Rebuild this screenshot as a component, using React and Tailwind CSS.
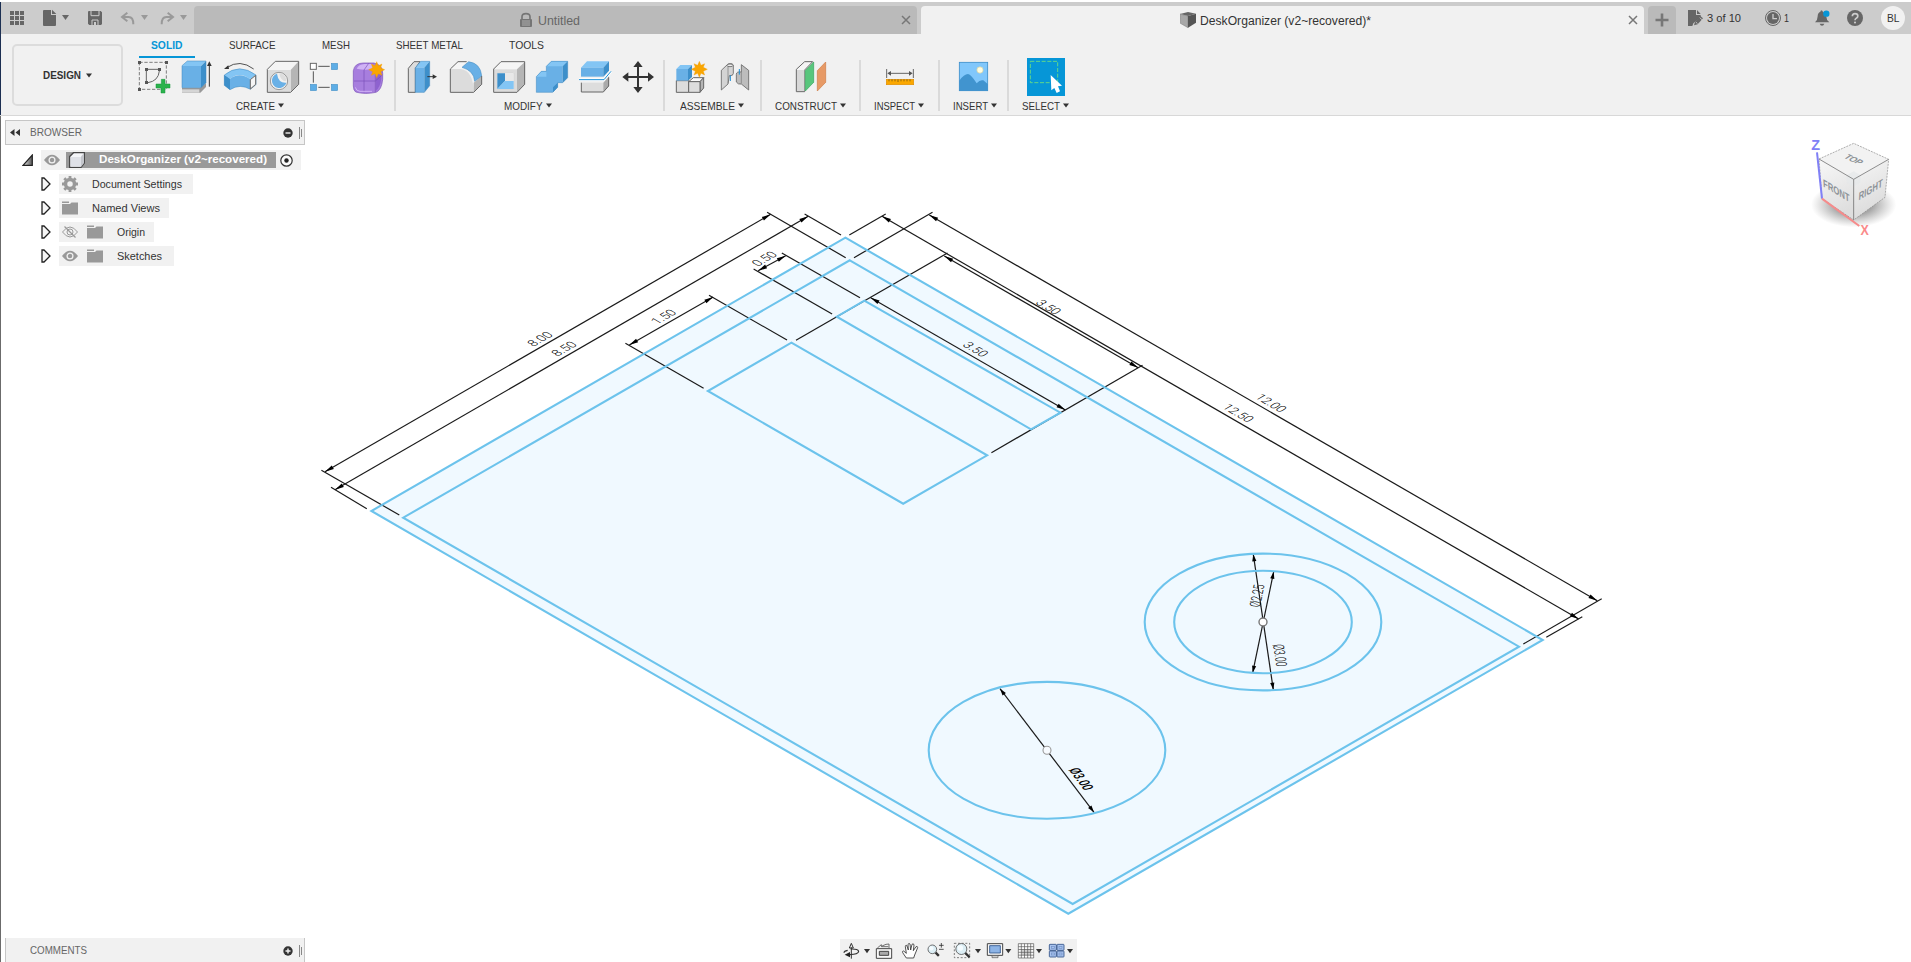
import React, { useLayoutEffect, useRef, useState } from "react";

/* One line of text, squeezed or stretched to an exact width in pixels. */
function Fit({ w, className = "", children }) {
  const ref = useRef(null);
  const [k, setK] = useState(1);
  useLayoutEffect(() => {
    const n = ref.current.getBoundingClientRect().width;
    if (n) setK(w / n);
  }, [w]);
  return (
    <span className="block shrink-0" style={{ width: w }}>
      <span
        ref={ref}
        className={"inline-block origin-left whitespace-nowrap align-top " + className}
        style={k === 1 ? undefined : { transform: `scaleX(${k})` }}
      >
        {children}
      </span>
    </span>
  );
}

/* Icon cell; drawing units are thirds of a pixel. */
function Ico({ x, y, w, h, children }) {
  return (
    <svg className="block shrink-0" width={w / 3} height={h / 3} viewBox={`${x} ${y} ${w} ${h}`}>
      {children}
    </svg>
  );
}

const Caret = () => (
  <svg className="mb-[2px] ml-[3px] block shrink-0" width="6" height="5" viewBox="0 0 6 5">
    <path d="M0 0.5H6L3 4.5Z" fill="#333" />
  </svg>
);

const STAR = "M0 -24L5 -12L16 -17L12 -6L24 0L12 6L16 17L5 12L0 24L-5 12L-16 17L-12 6L-24 0L-12 -6L-16 -17L-5 -12Z";

function Top(props) {
  return <Ico y={6} h={96} {...props} />;
}

function TitleBar() {
  return (
    <div className="flex h-[32px] w-full shrink-0 bg-[#ccc]">
      <div className="w-px shrink-0 bg-[#1c2f52]" />
      <Top x={3} w={96}>
        <g fill="#666">
          {[30, 45, 60].map((a) => [33, 48, 63].map((b) => <rect key={a + "-" + b} x={a} y={b} width="12" height="12" />))}
        </g>
      </Top>
      <Top x={99} w={132}>
        <path d="M132 30H153V45H168V75Q168 78 165 78H132Q129 78 129 75V33Q129 30 132 30Z" fill="#666" />
        <path d="M156 29L169 42H156Z" fill="#666" />
        <path d="M186 45H207L196.500 60Z" fill="#666" />
      </Top>
      <Top x={231} w={102}>
        <path d="M266 33H302L306 37V72L303 75H268L264 71V35Z" fill="#666" />
        <path d="M273 33V47H297V33" fill="none" stroke="#ccc" strokeWidth="3" />
        <path d="M276 75V60H294V75" fill="none" stroke="#ccc" strokeWidth="3" />
        <rect x="282" y="66" width="6" height="9" fill="#ccc" />
      </Top>
      <Top x={333} w={126}>
        <path d="M382 38L366 51L382 64M367 51H386Q400 51 400 73" fill="none" stroke="#999" strokeWidth="6" />
        <path d="M423 45H444L433.500 60Z" fill="#999" />
      </Top>
      <Top x={459} w={123}>
        <path d="M503 38L519 51L503 64M518 51H499Q485 51 485 73" fill="none" stroke="#999" strokeWidth="6" />
        <path d="M540 45H561L550.500 60Z" fill="#999" />
      </Top>
      <div className="mt-1 flex h-7 w-[723px] shrink-0 items-center rounded-t-[4px] bg-[#bababa] text-[12.5px] text-[#666]">
        <svg className="ml-[325px] block" width="14" height="16" viewBox="357 36 42 48">
          <path d="M366 57V50Q366 41 378 41Q390 41 390 50V57" fill="none" stroke="#757575" strokeWidth="5" />
          <rect x="360" y="57" width="36" height="24" rx="3" fill="#757575" />
          <path d="M366 63H390M366 69H390M366 75H390" stroke="#bababa" strokeWidth="2.500" />
        </svg>
        <div className="ml-[5px] flex-1 pt-[2px]">
          <Fit w={42}>Untitled</Fit>
        </div>
        <svg className="mr-[6px] block" width="10" height="10" viewBox="0 0 10 10">
          <path d="M1 1L9 9M9 1L1 9" stroke="#777" strokeWidth="1.500" />
        </svg>
      </div>
      <div className="mt-1 ml-1 flex h-7 w-[723px] shrink-0 items-center rounded-t-[4px] bg-[#f1f1f1] text-[12.5px] text-[#333]">
        <svg className="ml-[259px] block" width="16" height="16" viewBox="1140 36 48 48">
          <path d="M1140 42L1164 36L1188 41L1164 48Z" fill="#666" />
          <path d="M1140 42L1164 48V83L1141 70Z" fill="#a8a8a8" stroke="#777" strokeWidth="1.500" />
          <path d="M1164 48L1188 41V68L1164 83Z" fill="#555" />
        </svg>
        <div className="ml-[4px] flex-1 pt-[2px]">
          <Fit w={171}>DeskOrganizer (v2~recovered)*</Fit>
        </div>
        <svg className="mr-[6px] block" width="10" height="10" viewBox="0 0 10 10">
          <path d="M1 1L9 9M9 1L1 9" stroke="#777" strokeWidth="1.500" />
        </svg>
      </div>
      <div className="mt-1 ml-1 flex h-7 w-7 shrink-0 items-center justify-center rounded-t-[4px] bg-[#bababa]">
        <svg className="block" width="14" height="14" viewBox="0 0 14 14">
          <path d="M7 0.500V13.500M0.500 7H13.500" stroke="#777" strokeWidth="2.600" />
        </svg>
      </div>
      <div className="flex flex-1 items-center text-[11px] text-[#333]">
        <Top x={528} w={93}>
          <path d="M564 30H588V45H602V52L580 70L577 78H564Z" fill="#666" />
          <path d="M591 30L602 42H591Z" fill="#666" />
          <path d="M582 76L585 66L601 48L609 55L593 73Z" fill="#666" />
          <path d="M588 66L592 71M599 53L606 59" stroke="#ccc" strokeWidth="2.500" />
        </Top>
        <Fit w={34}>3 of 10</Fit>
        <Top x={723} w={129}>
          <circle cx="819" cy="54" r="22.500" fill="#ccc" stroke="#666" strokeWidth="3" />
          <circle cx="819" cy="54" r="18" fill="#666" />
          <path d="M819 42V56H831" fill="none" stroke="#ccc" strokeWidth="4" />
        </Top>
        <Fit w={5}>1</Fit>
        <Top x={867} w={147}>
          <path d="M963 31Q968 31 969 36Q979 39 979 50Q979 60 988 67H945Q953 60 953 49Q953 38 961 35Z" fill="#666" />
          <path d="M959 71H973Q971 77 966 77Q961 77 959 71Z" fill="#666" />
          <circle cx="979" cy="41" r="9.500" fill="#0696d7" />
        </Top>
        <Top x={1014} w={99}>
          <circle cx="1065" cy="54" r="24" fill="#666" />
          <path d="M1057 49Q1057 41 1065 41Q1073.500 41 1073.500 48Q1073.500 52 1069 54.500Q1065 57 1065 61" fill="none" stroke="#ccc" strokeWidth="5" />
          <circle cx="1065" cy="67.500" r="3.200" fill="#ccc" />
        </Top>
        <div className="ml-[10px] flex h-6 w-6 items-center justify-center rounded-full bg-[#f1f1f1]">
          <Fit w={12.5}>BL</Fit>
        </div>
      </div>
    </div>
  );
}

function Cell({ x, children }) {
  return (
    <Ico x={x} y={174} w={129} h={117}>
      {children}
    </Ico>
  );
}

function Group({ className, iconsClass, labelClass, label, w, last, children }) {
  return (
    <div className={"flex shrink-0 " + className}>
      <div className="flex flex-1 flex-col overflow-visible">
        <div className={"flex h-[39px] " + iconsClass}>{children}</div>
        <div className={"flex h-[18px] items-center pt-px text-[11px] text-[#333] " + labelClass}>
          <Fit w={w}>{label}</Fit>
          <Caret />
        </div>
      </div>
      {!last && <div className="mt-[2px] h-[51px] w-[2px] shrink-0 bg-[#dadada]" />}
    </div>
  );
}

const ST = { stroke: "#666", strokeWidth: 3, strokeLinejoin: "miter" };

function Toolbar() {
  return (
    <div className="flex h-[82px] w-full shrink-0 border-b border-[#d8d8d8] bg-[#f1f1f1]">
      <div className="w-px shrink-0 bg-[#1c2f52]" />
      <div className="mt-[10px] ml-[11px] flex h-[62px] w-[111px] shrink-0 items-center rounded-[5px] border-2 border-[#dcdcdc] pl-[29px] text-[11px] font-bold text-[#333]">
        <Fit w={38}>DESIGN</Fit>
        <svg className="ml-[5px] block" width="6" height="5" viewBox="0 0 6 5">
          <path d="M0 0.500H6L3 4.500Z" fill="#333" />
        </svg>
      </div>
      <div className="flex flex-1 flex-col">
        <div className="flex h-6 text-[11px] leading-[22px] text-[#333]">
          <div className="ml-4 flex w-[56px] justify-center border-b-2 border-[#0696d7] font-bold text-[#0696d7]">
            <Fit w={31.5}>SOLID</Fit>
          </div>
          <div className="ml-[34px] flex gap-[46px]">
            <Fit w={46.5}>SURFACE</Fit>
            <Fit w={28}>MESH</Fit>
            <Fit w={67}>SHEET METAL</Fit>
            <Fit w={35}>TOOLS</Fit>
          </div>
        </div>
        <div className="flex">
          <Group className="w-[273px]" iconsClass="pl-[12px]" labelClass="pl-[113px]" label="CREATE" w={39}>
            <Cell x={405}>
              <path d="M418 187H499V268H418Z" fill="none" stroke="#666" strokeWidth="2.500" strokeDasharray="10 5" />
              <g fill="#555">
                <rect x="414" y="183" width="9" height="9" /><rect x="495" y="183" width="9" height="9" />
                <rect x="414" y="264" width="9" height="9" /><rect x="435" y="204" width="9" height="9" />
                <rect x="474" y="204" width="9" height="9" /><rect x="435" y="243" width="9" height="9" />
              </g>
              <path d="M444 208H474M439 213V243M478 213Q475 243 444 248" fill="none" stroke="#666" strokeWidth="3" />
              <path d="M484 238H495V252H510V264H495V279H483V264H468V252H484Z" fill="#2bb24c" stroke="#15953a" strokeWidth="1.500" />
            </Cell>
            <Cell x={534}>
              <path d="M546 264H600L618 249V261L601 278H546Z" fill="#999" /><path d="M546 268H598V278H546Z" fill="#d5d5d5" />
              <path d="M546 197L562 183H618L602 198H546Z" fill="#83c5f4" />
              <path d="M546 198H603V263H546Z" fill="#69b0e6" /><path d="M603 198L618 183V248L603 263Z" fill="#3d8fca" />
              <path d="M546 197L562 183H618V248L603 263H546Z" fill="none" stroke="#3d87bd" strokeWidth="1.500" />
              <path d="M628 260V196" stroke="#333" strokeWidth="3" /><path d="M628 184L635 198H621Z" fill="#333" />
            </Cell>
            <Cell x={663}>
              <path d="M680 203Q720 176 761 207" fill="none" stroke="#333" strokeWidth="2.500" />
              <path d="M672 207L685 196L687 207Z" fill="#333" />
              <path d="M673 225Q718 188 768 225L751 238Q718 212 690 237Z" fill="#83c5f4" />
              <path d="M690 237Q718 214 751 238V268Q720 250 690 269L673 256V225Z" fill="#69b0e6" />
              <path d="M673 225L690 237V269L673 256Z" fill="#3d8fca" />
              <path d="M673 225Q718 188 768 225V254L751 268Q720 250 690 269L673 256Z" fill="none" stroke="#3d87bd" strokeWidth="1.500" />
              <path d="M751 239L767 226V253L751 267Z" fill="#f5f5f5" stroke="#666" strokeWidth="3" />
            </Cell>
            <Cell x={792}>
              <path d="M802 207L826 184H896L872 212H802Z" fill="#f4f4f4" /><path d="M872 210L896 184V253L872 277Z" fill="#b5b5b5" />
              <path d="M802 210H872V277H802Z" fill="#dcdcdc" />
              <path d="M802 208L826 184H896V253L872 277H802Z" fill="none" {...ST} />
              <circle cx="837" cy="243" r="26" fill="#f1f1f1" stroke="#888" strokeWidth="2.500" />
              <path d="M831 221A22 22 0 1 0 859 248Q835 250 831 221Z" fill="#69b0e6" /><path d="M838 220Q841 243 859 244A22 22 0 0 0 838 220Z" fill="#ddd" />
            </Cell>
            <Cell x={921}>
              <path d="M955 199H989M940 214V248M955 262H989" stroke="#555" strokeWidth="3" />
              <rect x="931" y="190" width="18" height="18" fill="#fff" stroke="#666" strokeWidth="3" />
              <g fill="#5dade6" stroke="#3d87bd" strokeWidth="1.500">
                <rect x="994" y="190" width="19" height="19" /><rect x="931" y="253" width="19" height="19" /><rect x="994" y="253" width="19" height="19" />
              </g>
            </Cell>
            <Cell x={1050}>
              <path d="M1060 212Q1064 189 1090 189H1122Q1148 195 1148 220V238Q1145 270 1128 277Q1094 284 1067 276Q1060 270 1060 258Z" fill="#a77ede" stroke="#7a50b8" strokeWidth="2" />
              <path d="M1070 206Q1076 193 1094 192H1116Q1122 202 1116 207Q1094 212 1070 206Z" fill="#d0b3f5" />
              <path d="M1128 214L1144 208V236Q1141 260 1128 272Z" fill="#8e62cf" />
              <path d="M1062 243H1126L1147 225M1092 277V210L1106 190M1126 276V212" fill="none" stroke="#7a50b8" strokeWidth="2" />
              <path d="M1066 262Q1068 273 1080 274H1116" fill="none" stroke="#d0b3f5" strokeWidth="3" />
              <path transform="translate(1130 209)" d={STAR} fill="#f9a602" stroke="#f39a00" strokeWidth="1" />
            </Cell>
          </Group>
          <Group className="w-[269px]" iconsClass="pl-[9px]" labelClass="pl-[108px]" label="MODIFY" w={38.5}>
            <Cell x={15}>
              <path d="M25 205L42 185H60L46 205V277H25Z" fill="#ddd" {...ST} />
              <path d="M46 203L62 184H89L73 203Z" fill="#83c5f4" /><path d="M46 203H73V277H46Z" fill="#69b0e6" />
              <path d="M73 203L89 184V257L73 277Z" fill="#3d8fca" />
              <path d="M46 203L62 184H89V257L73 277H46Z" fill="none" stroke="#3d87bd" strokeWidth="1.500" />
              <path d="M82 230H100" stroke="#333" strokeWidth="3" /><path d="M111 230L98 223V237Z" fill="#333" />
            </Cell>
            <Cell x={144}>
              <path d="M151 207L174 185H196L184 207Z" fill="#f5f5f5" />
              <path d="M151 207H182Q220 212 221 277H151Z" fill="#dcdcdc" />
              <path d="M221 248L245 228V253L221 277Z" fill="#b5b5b5" />
              <path d="M186 202L206 185Q242 190 245 228L224 244Q222 212 186 202Z" fill="#69b0e6" stroke="#3d87bd" strokeWidth="1.500" />
              <path d="M200 185H174L151 207V277H221L245 253V228" fill="none" {...ST} />
            </Cell>
            <Cell x={273}>
              <path d="M281 207L303 185H375L351 208Z" fill="#f5f5f5" /><path d="M351 208L375 185V253L351 277Z" fill="#b5b5b5" />
              <path d="M281 208H351V277H281Z" fill="#dcdcdc" /><path d="M281 207L303 185H374V253L351 277H281Z" fill="none" {...ST} />
              <path d="M290 218H342V268H290Z" fill="#f1f1f1" /><path d="M291 219H341V267H291Z" fill="#f8f8f8" stroke="#aaa" strokeWidth="1" />
              <path d="M292 220H315V243L292 267Z" fill="#3d8fca" /><path d="M315 243H341V267H292Z" fill="#83c5f4" /><path d="M315 220H341V243H315Z" fill="#e8e8e8" />
            </Cell>
            <Cell x={402}>
              <path d="M409 230L424 214H439V199L454 184H503L488 199V248H473V262L458 277H409Z" fill="#69b0e6" />
              <path d="M439 199L454 184H503L488 199ZM409 230L424 214H439V230Z" fill="#83c5f4" />
              <path d="M488 199L503 184V233L488 248ZM459 262L473 248V262L459 277Z" fill="#3d8fca" />
              <path d="M409 230L424 214H439V199L454 184H503V233L488 248H473V262L458 277H409Z" fill="none" stroke="#3d87bd" strokeWidth="1.500" />
            </Cell>
            <Cell x={531}>
              <path d="M543 203L561 184H627L610 203Z" fill="#83c5f4" /><path d="M543 203H610V230H543Z" fill="#69b0e6" /><path d="M610 203L627 184V212L610 230Z" fill="#3d8fca" />
              <path d="M537 239H612L633 214" fill="none" stroke="#fff" strokeWidth="8" /><path d="M537 239H612L633 214" fill="none" stroke="#1b8fd6" strokeWidth="3" />
              <path d="M544 248H610V276H544Z" fill="#ddd" /><path d="M610 248L627 229V258L610 276Z" fill="#aaa" />
              <path d="M544 248V276H610L626 258V232" fill="none" {...ST} />
            </Cell>
            <Cell x={660}>
              <path d="M714 195V266M680 231H750" stroke="#333" strokeWidth="6" />
              <path d="M714 183L728 201H700ZM714 279L728 261H700ZM667 231L685 217V245ZM762 231L744 217V245Z" fill="#333" />
            </Cell>
          </Group>
          <Group className="w-[97px]" iconsClass="pl-[8px]" labelClass="pl-[15px]" label="ASSEMBLE" w={55}>
            <Cell x={819}>
              <path d="M829 242H866V277H829Z" fill="#ddd" {...ST} /><path d="M866 245L880 233H911L900 245Z" fill="#fafafa" {...ST} />
              <path d="M900 245L911 233V264L900 277Z" fill="#b5b5b5" {...ST} /><path d="M866 245H900V277H866Z" fill="#ddd" {...ST} />
              <path d="M829 207L841 195H876L864 207Z" fill="#83c5f4" /><path d="M829 207H864V242H829Z" fill="#69b0e6" /><path d="M864 207L876 195V231L864 242Z" fill="#3d8fca" />
              <path transform="translate(898 208)" d={STAR} fill="#f9a602" stroke="#f39a00" strokeWidth="1" />
            </Cell>
            <Cell x={948}>
              <path d="M964 211L984 192Q1000 188 1000 198V220Q1000 228 988 227L984 252L964 270Z" fill="#d4d4d4" {...ST} strokeWidth="2.500" />
              <ellipse cx="990" cy="196" rx="9" ry="4" fill="#eee" stroke="#666" strokeWidth="2.500" /><path d="M984 199V250" stroke="#777" strokeWidth="2" />
              <path d="M1046 211L1024 194V216Q1009 214 1009 223V246Q1014 254 1024 252L1046 270Z" fill="#bdbdbd" {...ST} strokeWidth="2.500" />
              <path d="M1024 216V250" stroke="#777" strokeWidth="2" />
              <path d="M991 226V243M1018 207V224" stroke="#1b8fd6" strokeWidth="3" />
            </Cell>
          </Group>
          <Group className="w-[99px]" iconsClass="pl-[31px]" labelClass="pl-[13px]" label="CONSTRUCT" w={62}>
            <Cell x={-21}>
              <path d="M-11 208L14 185H38L14 210V275H-11Z" fill="#f5f5f5" {...ST} /><path d="M-9 210H13V273H-9Z" fill="#d8d8d8" />
              <path d="M16 212L41 186V247L16 273Z" fill="#58c67c" stroke="#35a45b" strokeWidth="2" />
              <path d="M52 212L77 186V247L52 273Z" fill="#e79a66" stroke="#cf7a43" strokeWidth="2" />
            </Cell>
          </Group>
          <Group className="w-[79px]" iconsClass="pl-[23px]" labelClass="pl-[13px]" label="INSPECT" w={41}>
            <Cell x={252}>
              <path d="M260 207V234M340 207V234M268 220H332" stroke="#666" strokeWidth="3" />
              <path d="M262 220L273 213V227ZM338 220L327 213V227Z" fill="#555" />
              <rect x="259" y="238" width="82" height="16" fill="#fba800" stroke="#e08e00" strokeWidth="2" />
              <path d="M267 238V244M276 238V244M285 238V244M294 238V246M303 238V244M312 238V244M321 238V244M330 238V244" stroke="#7a5a10" strokeWidth="2.500" />
            </Cell>
          </Group>
          <Group className="w-[69px]" iconsClass="pl-[17px]" labelClass="pl-[13px]" label="INSERT" w={35}>
            <Cell x={471}>
              <rect x="478" y="187" width="85" height="85" fill="#81c7fb" />
              <path d="M478 242Q492 222 504 222Q514 224 530 250Q540 238 550 241L563 252V272H478Z" fill="#4194cf" />
              <rect x="478" y="187" width="85" height="85" fill="none" stroke="#3d8fca" strokeWidth="2.500" />
              <circle cx="540" cy="210" r="9.500" fill="#fffde0" stroke="#d3cfa0" strokeWidth="2" />
            </Cell>
          </Group>
          <Group className="w-[200px]" iconsClass="pl-[16px]" labelClass="pl-[13px]" label="SELECT" w={38} last>
            <Cell x={675}>
              <rect x="681" y="174" width="114" height="114" fill="#0696d7" />
              <path d="M691 184H773V248H691Z" fill="none" stroke="#62d68a" strokeWidth="3" strokeDasharray="12 5" />
              <path d="M752 225L786 257L774 259L780 274L770 279L763 264L754 271Z" fill="#fff" />
            </Cell>
          </Group>
        </div>
      </div>
    </div>
  );
}

const Grip = () => (
  <svg className="block shrink-0" width="4" height="12" viewBox="0 0 4 12">
    <path d="M0.500 0V12" stroke="#888" /><path d="M2.500 2V10" stroke="#888" />
  </svg>
);

function Eye({ off }) {
  return (
    <svg className="block shrink-0" width="16" height="12" viewBox="0 0 16 12">
      {off ? (
        <g fill="none" stroke="#999" strokeWidth="1">
          <path d="M0.500 6Q8 -4 15.500 6Q8 16 0.500 6Z" /><circle cx="8" cy="6" r="3" /><path d="M2.500 0.500L13.500 11.500" strokeWidth="1.300" />
        </g>
      ) : (
        <g>
          <path d="M0 6Q8 -4.500 16 6Q8 16.500 0 6Z" fill="#999" />
          <circle cx="8" cy="6" r="2.900" fill="none" stroke="#f1f1f1" strokeWidth="1.300" />
        </g>
      )}
    </svg>
  );
}

const Folder = () => (
  <svg className="block shrink-0" width="16" height="14" viewBox="0 0 16 14">
    <path d="M0 0.500H7V2H0ZM0 3H8L9.500 1.500H16V13.500H0Z" fill="#999" />
  </svg>
);

const Gear = () => (
  <svg className="block shrink-0" width="16" height="16" viewBox="0 0 16 16">
    <circle cx="8" cy="8" r="4.500" fill="none" stroke="#999" strokeWidth="3.500" />
    <path d="M8 0V3M8 13V16M0 8H3M13 8H16M2.300 2.300L4.500 4.500M11.500 11.500L13.700 13.700M13.700 2.300L11.500 4.500M4.500 11.500L2.300 13.700" stroke="#999" strokeWidth="2.800" />
  </svg>
);

function Node({ width, eye, icon, label, w }) {
  return (
    <div className="flex h-5 items-center">
      <svg className="mr-[8px] ml-[36px] block shrink-0" width="10" height="14" viewBox="0 0 10 14">
        <path d="M1 1H3L9 7L3 13H1Z" fill="#f6f6f6" stroke="#222" strokeWidth="1.300" />
      </svg>
      <div className={"flex h-5 items-center bg-[#f1f1f1] pl-[3px] text-[11px] text-[#333] " + width}>
        {eye && <span className="mr-[9px]"><Eye off={eye === "off"} /></span>}
        {icon === "gear" ? <Gear /> : <Folder />}
        <span className="ml-[14px]"><Fit w={w}>{label}</Fit></span>
      </div>
    </div>
  );
}

function Browser() {
  return (
    <div className="flex w-[300px] flex-col">
      <div className="flex h-[25px] items-center border border-[#c6c6c6] bg-[#f1f1f1] pr-[1px] pl-[4px] text-[11px] text-[#666]">
        <svg className="mr-[10px] block" width="10" height="7" viewBox="0 0 10 7">
          <path d="M0 3.500L4.500 0V7ZM5.500 3.500L10 0V7Z" fill="#333" />
        </svg>
        <div className="flex-1"><Fit w={52}>BROWSER</Fit></div>
        <svg className="mr-[6px] block" width="10" height="10" viewBox="0 0 10 10">
          <circle cx="5" cy="5" r="4.700" fill="#333" /><path d="M2.500 5H7.500" stroke="#f1f1f1" strokeWidth="1.400" />
        </svg>
        <Grip />
      </div>
      <div className="mt-[5px] flex flex-col gap-1">
        <div className="flex h-5 items-center">
          <svg className="mr-[8px] ml-[17px] block shrink-0" width="11" height="12" viewBox="0 0 11 12">
            <defs><linearGradient id="tw"><stop offset="0" stopColor="#eee" /><stop offset="1" stopColor="#555" /></linearGradient></defs>
            <path d="M1 11.300L10.300 1V11.300Z" fill="url(#tw)" stroke="#222" strokeWidth="1.200" />
          </svg>
          <div className="flex h-5 w-[260px] items-center bg-[#f1f1f1] pl-[3px]">
            <Eye />
            <div className="ml-[6px] flex h-4 w-[210px] items-center bg-[#999] pl-[3px] text-[11.5px] font-bold text-white">
              <svg className="mr-[14px] block shrink-0" width="16" height="16" viewBox="0 0 16 16">
                <path d="M0.700 4.500L4.500 0.700H15.300V11L12 15.300H0.700Z" fill="#f4f5f8" stroke="#444" strokeWidth="1.300" />
                <path d="M12 4.500L15 1V11L12 15Z" fill="#c4c6cc" /><path d="M1.500 5H12V14.600H1.500Z" fill="#dfe1e7" />
              </svg>
              <Fit w={168}>DeskOrganizer (v2~recovered)</Fit>
            </div>
            <svg className="ml-[4px] block shrink-0" width="13" height="13" viewBox="0 0 13 13">
              <circle cx="6.500" cy="6.500" r="5.700" fill="#fafafa" stroke="#333" strokeWidth="1.200" /><circle cx="6.500" cy="6.500" r="2.200" fill="#222" />
            </svg>
          </div>
        </div>
        <Node width="w-[134px]" icon="gear" label="Document Settings" w={90} />
        <Node width="w-[110px]" icon="folder" label="Named Views" w={68} />
        <Node width="w-[95px]" eye="off" icon="folder" label="Origin" w={28} />
        <Node width="w-[115px]" eye="on" icon="folder" label="Sketches" w={45} />
      </div>
    </div>
  );
}

/* Extension lines of the linear dimensions: x1 y1 x2 y2 */
const EXT = [
  [321.4, 470.3, 399.3, 515], [767.1, 212.3, 845.7, 257.7],
  [331, 487.3, 366.8, 508.7], [804.6, 214, 841, 235],
  [753.6, 269, 832.1, 314], [781.8, 253, 860, 297.7],
  [625.4, 343.3, 703.6, 388.3], [709, 295.3, 787, 340],
  [932.5, 212.3, 854, 257.7], [1601.7, 598.7, 1523.3, 644],
  [885.7, 214, 849.3, 235], [1582.3, 616.7, 1546.3, 637.3],
  [947.5, 253, 796, 340.3], [1142.5, 365.3, 991.4, 452.7],
];
const DIMS = [
  [325, 471.7, 770.7, 214.3], [335, 489.7, 808.2, 216.3], [758.2, 270.7, 785.7, 255.7],
  [629.3, 345, 713.2, 297], [929.3, 215, 1597.3, 600.7], [882.1, 216.3, 1578.7, 619],
  [944.3, 256, 1138.2, 367.7], [870.7, 297.7, 1065.4, 410],
  [1253.3, 554.3, 1273.3, 689.7], [1273.7, 571.7, 1252.7, 672.7], [1000, 688.7, 1094, 812.3],
];
const L = "0.866 -0.5 0.866 0.5";
const R = "0.866 0.5 -0.866 0.5";
const VALUES = [
  ["8.00", L, 540, 339], ["8.50", L, 564, 348.7], ["1.50", L, 663.6, 316.7], ["0.50", L, 764.3, 258.7],
  ["3.50", R, 1048.6, 307], ["3.50", R, 975.7, 349.3], ["12.00", R, 1271, 403], ["12.50", R, 1238.2, 413],
  ["Ø2.25", "0.146 -0.702 1.216 0.084", 1257, 595.7],
  ["Ø3.00", "0.104 0.704 -1.22 0.06", 1280, 655.3],
  ["Ø3.00", "0.492 0.648 -1.122 0.284", 1081.3, 779],
];

function head(tx, ty, fx, fy) {
  const d = Math.hypot(tx - fx, ty - fy);
  const ux = (tx - fx) / d, uy = (ty - fy) / d;
  const n = Math.abs(uy) > 0.7 ? 7 : 9, s = 2.1;
  const bx = tx - ux * n, by = ty - uy * n;
  return `${tx},${ty} ${bx - uy * s},${by + ux * s} ${bx + uy * s},${by - ux * s}`;
}

function Sketch() {
  return (
    <svg className="block" width="1910" height="846" viewBox="1 116 1910 846">
      <path d="M845.400 237.700L1542.700 640L1068.300 913.700L371.400 511Z" fill="#f0f9ff" />
      <g stroke="#1a1a1a" strokeWidth="1.200">
        {[...EXT, ...DIMS].map((d, i) => <line key={i} x1={d[0]} y1={d[1]} x2={d[2]} y2={d[3]} />)}
      </g>
      <g fill="#000">
        {DIMS.map((d, i) => (
          <g key={i}>
            <polygon points={head(d[0], d[1], d[2], d[3])} /><polygon points={head(d[2], d[3], d[0], d[1])} />
          </g>
        ))}
      </g>
      <g fill="none" stroke="#6cc3ec" strokeWidth="2.100">
        <path d="M845.400 237.700L1542.700 640L1068.300 913.700L371.400 511Z" />
        <path d="M849.800 260.300L1519 646.700L1072.700 904L403.200 517.700Z" />
        <path d="M791.400 342.700L987.100 455.300L903.200 503.700L707.900 391Z" />
        <path d="M864.300 300.700L1060.400 412.700L1031 429.300L836.800 316.700Z" />
        <ellipse cx="1263" cy="622" rx="118.300" ry="68.400" /><ellipse cx="1263" cy="622" rx="88.800" ry="51.200" />
        <ellipse cx="1047" cy="750.300" rx="118.300" ry="68.400" />
      </g>
      <circle cx="1263" cy="622" r="4" fill="#fff" stroke="#777" strokeWidth="1.400" />
      <circle cx="1047" cy="750.300" r="4" fill="#f7fbff" stroke="#999" strokeWidth="1.100" />
      <g fill="#000" className="font-['Roboto','Liberation_Sans',sans-serif] text-[12.300px]" textAnchor="middle">
        {VALUES.map(([t, m, x, y], i) => (
          <text key={i} transform={`matrix(${m} ${x} ${y})`} y="4.300" fontWeight={i === 10 ? 500 : 300}>{t}</text>
        ))}
      </g>
    </svg>
  );
}

function ViewCube() {
  return (
    <svg className="block" width="116" height="120" viewBox="885 390 348 360">
      <defs>
        <linearGradient id="cf" x1="0" y1="0" x2="0.300" y2="1"><stop offset="0" stopColor="#f8f8f8" /><stop offset="1" stopColor="#dedede" /></linearGradient>
        <linearGradient id="cr" x1="0.300" y1="0" x2="0.600" y2="1"><stop offset="0" stopColor="#f4f4f4" /><stop offset="1" stopColor="#d8d8d8" /></linearGradient>
        <radialGradient id="cs"><stop offset="0.450" stopColor="#777" stopOpacity="0.650" /><stop offset="1" stopColor="#999" stopOpacity="0" /></radialGradient>
      </defs>
      <ellipse cx="1061" cy="614" rx="128" ry="68" fill="url(#cs)" />
      <path d="M957 477L1061 538V660L966 596Z" fill="url(#cf)" /><path d="M1061 538L1166 478L1155 592L1061 660Z" fill="url(#cr)" />
      <path d="M1061 430L1166 478L1061 538L957 477Z" fill="#f2f2f2" />
      <path d="M1040 526L1061 514L1082 526V548L1061 560L1040 548Z" fill="#e5e8ea" fillOpacity="0.700" />
      <path d="M957 477L1061 430L1166 478L1155 592L1061 660L966 596Z" fill="none" stroke="#888" strokeWidth="2" strokeDasharray="6 3" />
      <path d="M957 477L1061 538L1166 478M1061 538V660" fill="none" stroke="#777" strokeWidth="2.500" />
      <path d="M951 457L966 596" stroke="#8080f6" strokeWidth="6" /><path d="M966 596L1078 678" stroke="#f68b8b" strokeWidth="6" />
      <g className="font-['Liberation_Sans',sans-serif]" textAnchor="middle" fill="#8d9297" fontWeight="bold">
        <text transform="matrix(0.76 0.38 -0.8 0.53 1062 478)" y="11" fontSize="30">TOP</text>
        <text transform="matrix(0.7 0.42 0.05 1 1009 571)" y="12" fontSize="33">FRONT</text>
        <text transform="matrix(0.7 -0.42 -0.05 1 1112 568)" y="12" fontSize="33">RIGHT</text>
        <text x="947" y="451" fontSize="43" fill="#8080f6">Z</text>
        <text x="1094" y="704" fontSize="43" fill="#fa8a8a" textLength="25" lengthAdjust="spacingAndGlyphs">X</text>
      </g>
    </svg>
  );
}

function NavBar() {
  const C = (p) => <Ico y={837} h={69} {...p} />;
  const tri = (x) => <path d={`M${x - 9} 867H${x + 9}L${x} 880Z`} fill="#333" />;
  const glass = (cx, cy, r) => (
    <g>
      <path d={`M${cx + r * 0.7} ${cy + r * 0.7}L${cx + r * 1.5} ${cy + r * 1.5}`} stroke="#333" strokeWidth="7" />
      <circle cx={cx} cy={cy} r={r} fill="#dceef5" stroke="#555" strokeWidth="2.500" />
      <circle cx={cx - 3} cy={cy - 3} r={r * 0.5} fill="#f5fcff" />
    </g>
  );
  return (
    <div className="flex h-[23px] w-[237px] bg-[#f1f1f1]">
      <C x={60} w={96}>
        <path d="M94 896V862M88 864L94 850L100 864Z" fill="#f1f1f1" stroke="#333" strokeWidth="3" />
        <path d="M92 867Q116 866 116 875Q114 883 90 884M83 871Q72 873 72 878" fill="none" stroke="#333" strokeWidth="3.500" />
        <path d="M74 884L90 876V892Z" fill="#222" />
        {tri(141)}
      </C>
      <C x={156} w={75}>
        <path d="M169 866H215V895H169Z" fill="#f8f8f8" stroke="#444" strokeWidth="3" /><path d="M178 874H206V886H178Z" fill="#aaa" stroke="#444" strokeWidth="3" />
        <path d="M172 864L184 854V859L198 853L207 852V864M184 860H205" fill="none" stroke="#555" strokeWidth="2.500" />
      </C>
      <C x={231} w={78}>
        <path d="M259 894L248 878Q246 873 251 873L259 880L256 860Q256 855 260 856L265 870L264 853Q267 848 270 852L272 870L276 853Q281 849 282 855L280 872L288 860Q293 858 293 863L284 885L281 894Z" fill="#fff" stroke="#333" strokeWidth="2.500" strokeLinejoin="round" />
      </C>
      <C x={309} w={81}>
        {glass(337, 868, 13)}
        <path d="M364 849V863M357 856H371M357 868H371" stroke="#333" strokeWidth="2.500" />
      </C>
      <C x={390} w={99}>
        <path d="M403 850H449V893H403Z" fill="none" stroke="#444" strokeWidth="2" strokeDasharray="6 5" />
        {glass(424, 867, 16.5)}
        {tri(474)}
      </C>
      <C x={489} w={93}>
        <path d="M502 851H548V886H502Z" fill="#f8f8f8" stroke="#444" strokeWidth="3" /><path d="M509 857H541V879H509Z" fill="#8db4e6" stroke="#2d5288" strokeWidth="2.500" />
        <path d="M516 887H534V893H516Z" fill="#ddd" stroke="#555" strokeWidth="2" />
        {tri(565)}
      </C>
      <C x={582} w={93}>
        <rect x="595" y="851" width="46" height="43" fill="#fafafa" /><rect x="604" y="868" width="28" height="18" fill="#cfcfcf" />
        <path d="M595 851H641V894H595ZM595 860H641M595 868.500H641M595 877H641M595 885.500H641M604 851V894M613.500 851V894M623 851V894M632 851V894" fill="none" stroke="#555" strokeWidth="2" />
        {tri(657)}
      </C>
      <C x={675} w={96}>
        <g fill="#a9c3ee" stroke="#2f4f86" strokeWidth="2.500">
          <rect x="688" y="853" width="21" height="18" rx="2" /><rect x="711" y="853" width="21" height="18" rx="2" />
          <rect x="688" y="873" width="21" height="18" rx="2" /><rect x="711" y="873" width="21" height="18" rx="2" />
        </g>
        <g fill="none" stroke="#6f8fc6" strokeWidth="2">
          <rect x="694" y="859" width="9" height="6" /><rect x="717" y="859" width="9" height="6" /><rect x="694" y="879" width="9" height="6" /><rect x="717" y="879" width="9" height="6" />
        </g>
        {tri(750)}
      </C>
    </div>
  );
}

export default function App() {
  return (
    <div className="flex h-screen w-full flex-col overflow-hidden bg-white pt-[2px] font-['Liberation_Sans',Arial,sans-serif]">
      <TitleBar />
      <Toolbar />
      <div className="flex min-h-0 flex-1">
        <div className="w-px shrink-0 bg-[#6b6b6b]" />
        <div className="relative min-w-0 flex-1 overflow-hidden">
          <Sketch />
          <div className="absolute top-[4px] left-[4px]"><Browser /></div>
          <div className="absolute top-[14px] right-0"><ViewCube /></div>
          <div className="absolute bottom-0 left-[839px]"><NavBar /></div>
          <div className="absolute bottom-0 left-[4px] flex h-6 w-[300px] items-center border-x border-[#c6c6c6] bg-[#f1f1f1] pt-px pr-[1px] pl-[24px] text-[11px] text-[#666]">
            <div className="flex-1"><Fit w={57}>COMMENTS</Fit></div>
            <svg className="mr-[6px] block" width="10" height="10" viewBox="0 0 10 10">
              <circle cx="5" cy="5" r="4.700" fill="#333" /><path d="M2.500 5H7.500M5 2.500V7.500" stroke="#f1f1f1" strokeWidth="1.400" />
            </svg>
            <Grip />
          </div>
        </div>
      </div>
    </div>
  );
}
